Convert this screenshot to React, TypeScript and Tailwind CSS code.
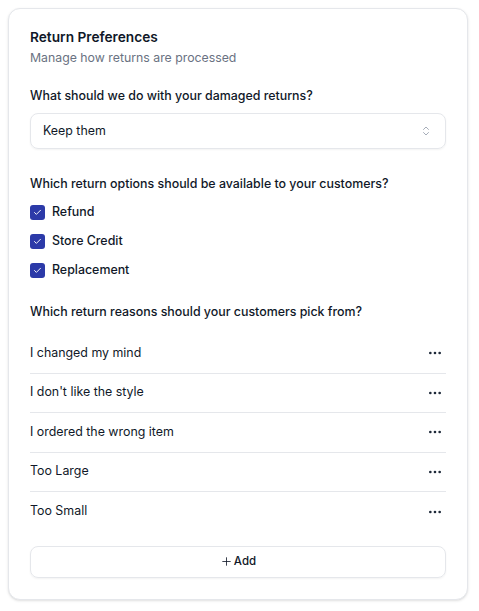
import { Check, ChevronsUpDown, MoreHorizontal, Plus } from 'lucide-react'

const options = ['Refund', 'Store Credit', 'Replacement']

const reasons = [
  'I changed my mind',
  "I don't like the style",
  'I ordered the wrong item',
  'Too Large',
  'Too Small',
]

export default function App() {
  return (
    <div className="min-h-screen bg-white p-2 font-['Inter',sans-serif] text-gray-900">
      <div className="w-[460px] rounded-xl border border-gray-200 bg-white px-[21px] pt-[17px] pb-[21px] shadow-sm">
        {/* Header */}
        <h2 className="text-[13.7px] font-semibold leading-[22px]">Return Preferences</h2>
        <p className="mt-px text-[12.3px] leading-[18px] text-gray-500">Manage how returns are processed</p>

        {/* Damaged returns */}
        <p className="mt-5 text-[12.4px] font-medium leading-[18px]">What should we do with your damaged returns?</p>
        <button className="mt-2 flex h-[36px] w-full items-center justify-between rounded-lg border border-gray-200 pl-3 pr-[13px] text-[12.4px] shadow-xs">
          <span>Keep them</span>
          <ChevronsUpDown className="h-3 w-3 text-gray-400" strokeWidth={1.75} />
        </button>

        {/* Return options */}
        <p className="mt-[26px] text-[12.4px] font-medium leading-[18px]">Which return options should be available to your customers?</p>
        <div className="mt-[9px] flex flex-col gap-[9px]">
          {options.map((o) => (
            <label key={o} className="flex h-5 items-center gap-[7px] text-[12.4px] font-medium">
              <span className="flex h-[15px] w-[15px] items-center justify-center rounded-[3px] bg-[#2c3aa8] text-white">
                <Check className="h-[9px] w-[9px]" strokeWidth={2.5} />
              </span>
              {o}
            </label>
          ))}
        </div>

        {/* Return reasons */}
        <p className="mt-[23px] text-[12.4px] font-medium leading-[18px]">Which return reasons should your customers pick from?</p>
        <div className="mt-[13px] flex flex-col divide-y divide-gray-200">
          {reasons.map((r) => (
            <div key={r} className="flex h-[39.5px] items-center justify-between text-[12.4px]">
              <span>{r}</span>
              <MoreHorizontal className="mr-[3px] h-4 w-4 text-gray-800" strokeWidth={2} />
            </div>
          ))}
        </div>

        <button className="mt-[14px] flex h-8 w-full items-center justify-center gap-px rounded-lg border border-gray-200 text-[11.5px] font-medium shadow-xs">
          <Plus className="h-[13px] w-[13px]" strokeWidth={1.5} />
          Add
        </button>
      </div>
    </div>
  )
}
